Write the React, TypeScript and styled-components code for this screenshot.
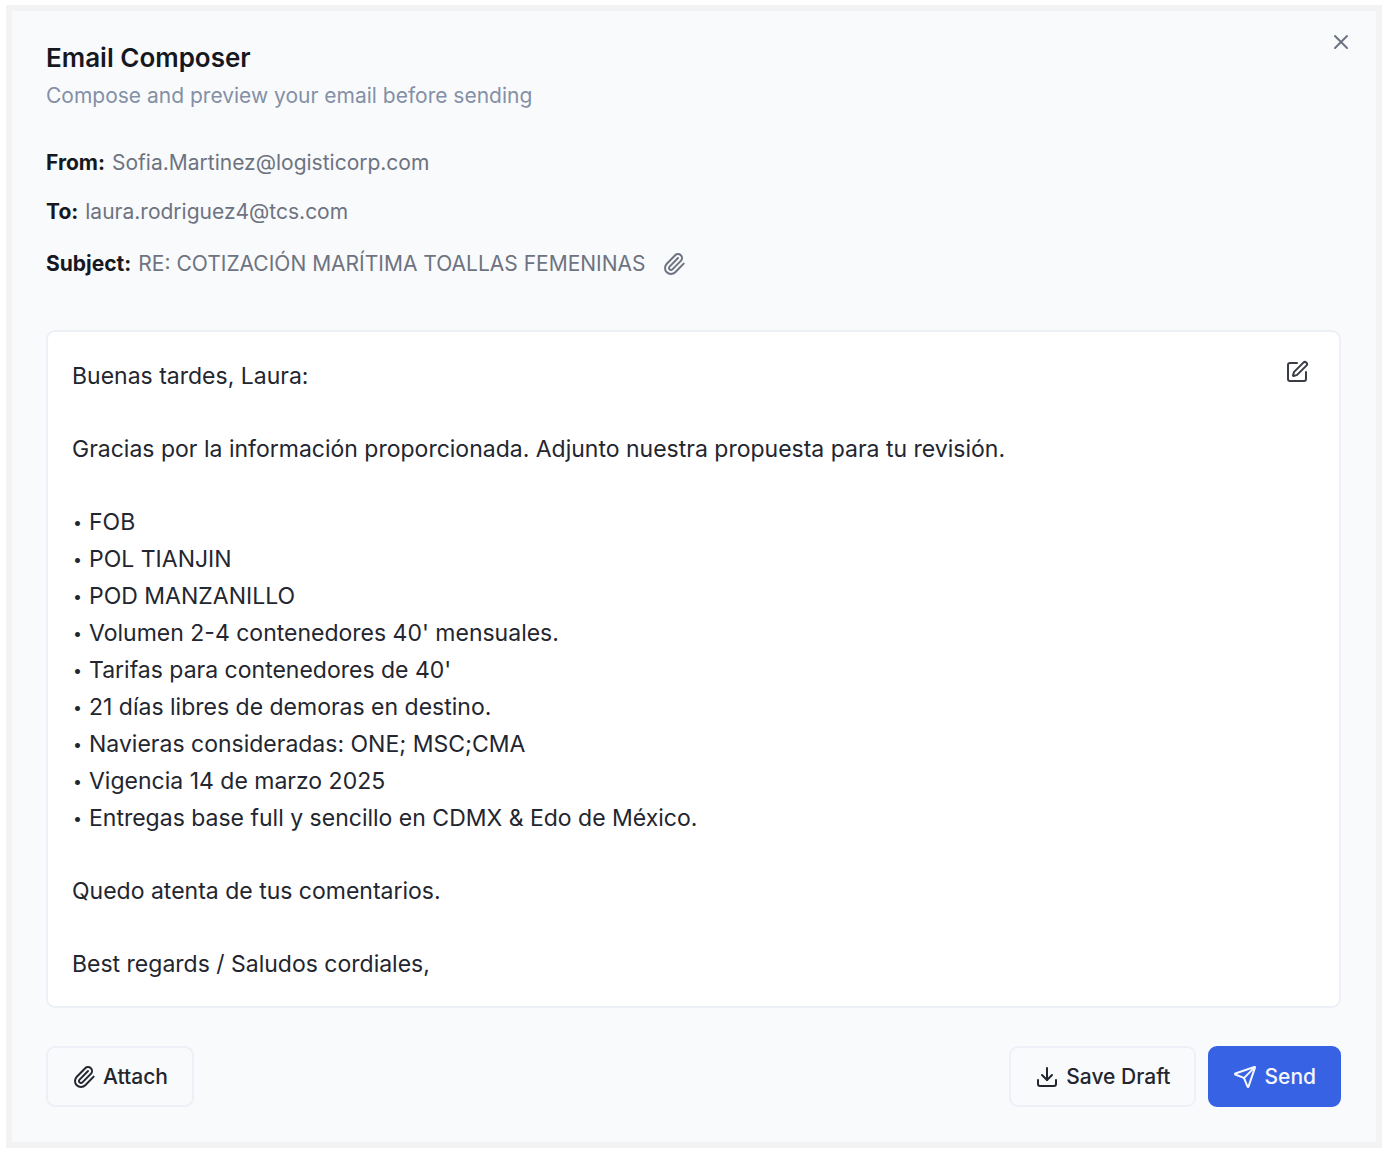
import React from "react";
import styled, { createGlobalStyle, css } from "styled-components";
import { Download, Paperclip, Send, SquarePen, X } from "lucide-react";

const GlobalStyle = createGlobalStyle`
  *, *::before, *::after { box-sizing: border-box; }
  body {
    margin: 0;
    background: #ffffff;
    color: #16181f;
    font-family: Inter, "Liberation Sans", sans-serif;
  }
`;

const Page = styled.div`
  padding: 5px 4px 7px 6px;
`;

const Dialog = styled.main`
  border: 6px solid #f3f3f3;
  background: #f9fafc;
`;

const Header = styled.header`
  display: flex;
  justify-content: space-between;
  align-items: flex-start;
  padding: 17px 21px 0 34px;
`;

const Heading = styled.div`
  padding-top: 12px;
`;

const Title = styled.h1`
  margin: 0;
  font-size: 26px;
  line-height: 36px;
  font-weight: 600;
`;

const Subtitle = styled.p`
  margin: 0;
  font-size: 21px;
  line-height: 40px;
  color: #8490a5;
`;

const IconButton = styled.button<{ $color: string }>`
  display: flex;
  padding: 2px;
  border: 0;
  background: none;
  color: ${(p) => p.$color};
  cursor: pointer;
`;

const Content = styled.div`
  display: flex;
  flex-direction: column;
  padding: 32px 35px 35px 34px;
`;

const Fields = styled.dl`
  display: flex;
  flex-direction: column;
  gap: 19px;
  margin: 0;
  font-size: 21px;
  line-height: 30px;
`;

const Field = styled.div<{ $tall?: boolean }>`
  display: flex;
  align-items: center;
  gap: 7px;
  min-height: ${(p) => (p.$tall ? "36px" : "30px")};
`;

const FieldName = styled.dt`
  font-weight: 700;
`;

const FieldValue = styled.dd`
  display: flex;
  align-items: center;
  gap: 16px;
  margin: 0;
  color: #6d7380;
`;

const Message = styled.section`
  display: flex;
  justify-content: space-between;
  align-items: flex-start;
  margin-top: 48px;
  padding: 26px 28px 23px 24px;
  border: 2px solid #edf0f6;
  border-radius: 9px;
  background: #ffffff;
`;

const MessageText = styled.div`
  display: flex;
  flex-direction: column;
  gap: 36px;
  font-size: 23px;
  line-height: 37px;
  color: #23262f;
`;

const Paragraph = styled.p`
  margin: 0;
`;

const Terms = styled.ul`
  margin: 0;
  padding: 0;
  list-style: none;
`;

const Term = styled.li`
  display: flex;
  align-items: center;

  &::before {
    content: "•";
    width: 17px;
    padding-left: 1px;
    font-size: 16px;
  }
`;

const Footer = styled.footer`
  display: flex;
  justify-content: space-between;
  margin-top: 38px;
`;

const Actions = styled.div`
  display: flex;
  gap: 12px;
`;

const Button = styled.button<{ $primary?: boolean }>`
  display: flex;
  align-items: center;
  gap: 7px;
  height: 61px;
  padding: 0 24px;
  border: 2px solid #edf0f6;
  border-radius: 9px;
  background: #f9fafc;
  color: #23262f;
  font-family: inherit;
  font-size: 21px;
  font-weight: 500;
  cursor: pointer;

  ${(p) =>
    p.$primary &&
    css`
      padding: 0 23px;
      border-color: #3662e3;
      background: #3662e3;
      color: #f5f7fd;
    `}
`;

const terms = [
  "FOB",
  "POL TIANJIN",
  "POD MANZANILLO",
  "Volumen 2-4 contenedores 40' mensuales.",
  "Tarifas para contenedores de 40'",
  "21 días libres de demoras en destino.",
  "Navieras consideradas: ONE; MSC;CMA",
  "Vigencia 14 de marzo 2025",
  "Entregas base full y sencillo en CDMX & Edo de México.",
];

export default function App() {
  return (
    <Page>
      <GlobalStyle />
      <Dialog>
        <Header>
          <Heading>
            <Title>Email Composer</Title>
            <Subtitle>Compose and preview your email before sending</Subtitle>
          </Heading>
          <IconButton type="button" $color="#6d7380" aria-label="Close">
            <X size={24} />
          </IconButton>
        </Header>
        <Content>
          <Fields>
            <Field>
              <FieldName>From:</FieldName>
              <FieldValue>Sofia.Martinez@logisticorp.com</FieldValue>
            </Field>
            <Field>
              <FieldName>To:</FieldName>
              <FieldValue>laura.rodriguez4@tcs.com</FieldValue>
            </Field>
            <Field $tall>
              <FieldName>Subject:</FieldName>
              <FieldValue>
                RE: COTIZACIÓN MARÍTIMA TOALLAS FEMENINAS
                <Paperclip size={24} />
              </FieldValue>
            </Field>
          </Fields>
          <Message>
            <MessageText>
              <Paragraph>Buenas tardes, Laura:</Paragraph>
              <Paragraph>
                Gracias por la información proporcionada. Adjunto nuestra
                propuesta para tu revisión.
              </Paragraph>
              <Terms>
                {terms.map((term) => (
                  <Term key={term}>{term}</Term>
                ))}
              </Terms>
              <Paragraph>Quedo atenta de tus comentarios.</Paragraph>
              <Paragraph>Best regards / Saludos cordiales,</Paragraph>
            </MessageText>
            <IconButton type="button" $color="#3a3d45" aria-label="Edit message">
              <SquarePen size={24} />
            </IconButton>
          </Message>
          <Footer>
            <Button type="button">
              <Paperclip size={24} />
              Attach
            </Button>
            <Actions>
              <Button type="button">
                <Download size={24} />
                Save Draft
              </Button>
              <Button type="button" $primary>
                <Send size={24} />
                Send
              </Button>
            </Actions>
          </Footer>
        </Content>
      </Dialog>
    </Page>
  );
}
